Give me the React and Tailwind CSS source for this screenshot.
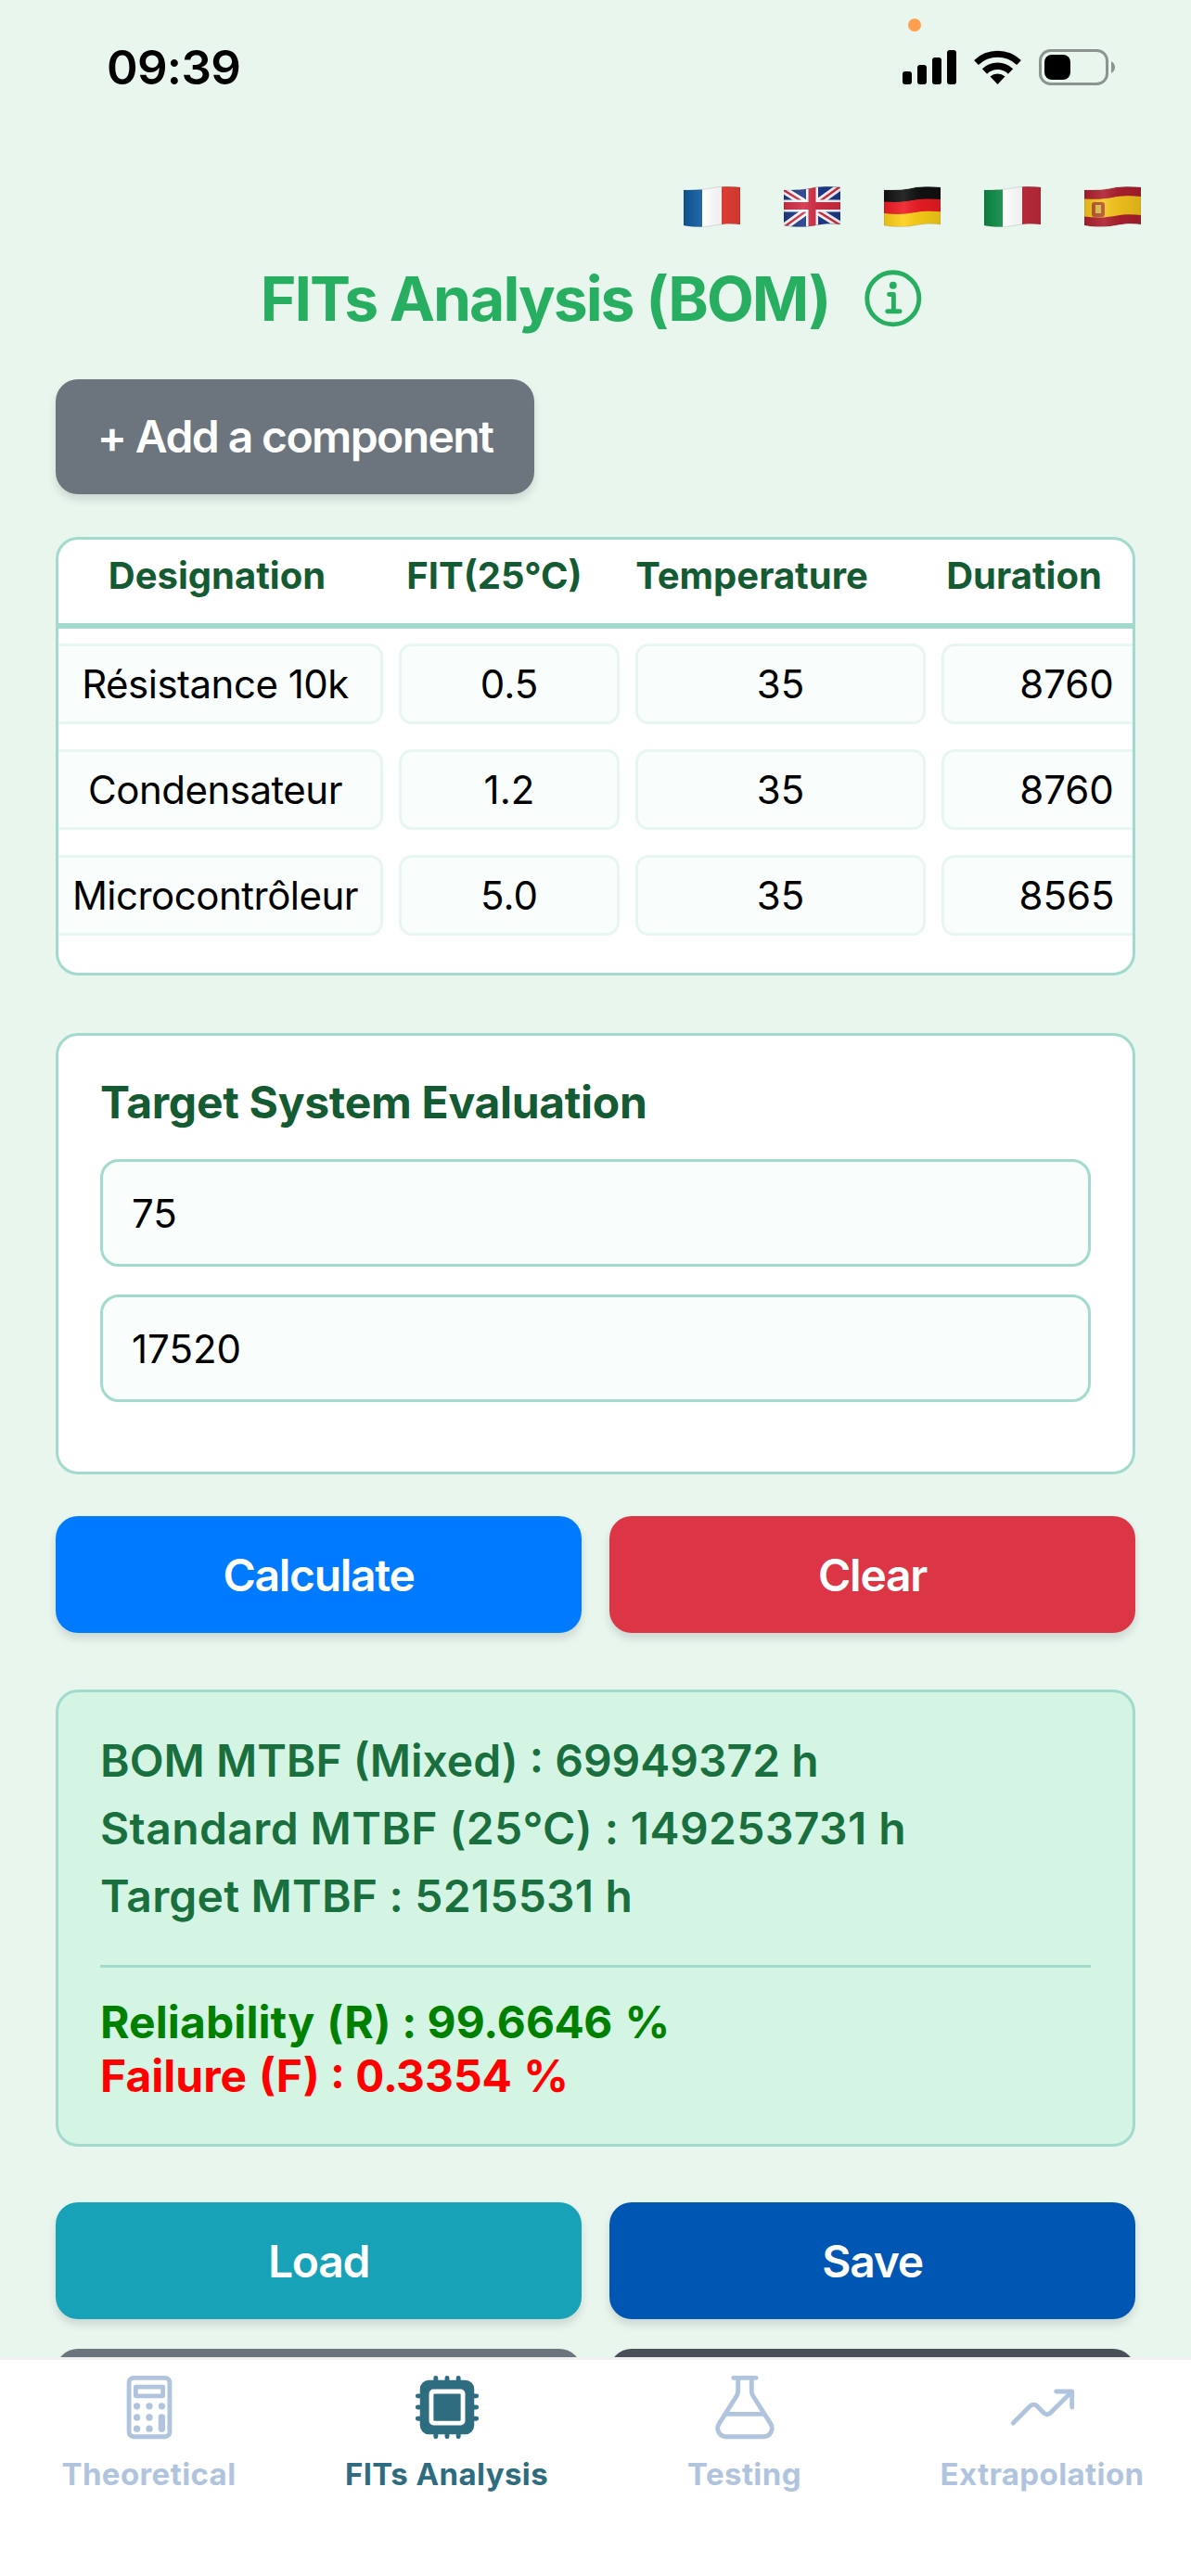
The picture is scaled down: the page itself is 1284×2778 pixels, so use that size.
import { IoCalculatorOutline, IoHardwareChip, IoFlaskOutline, IoTrendingUpOutline, IoInformationCircleOutline } from "react-icons/io5";

const rows = [
  { name: "Résistance 10k", fit: "0.5", temp: "35", duration: "8760" },
  { name: "Condensateur", fit: "1.2", temp: "35", duration: "8760" },
  { name: "Microcontrôleur", fit: "5.0", temp: "35", duration: "8565" },
];

const tabs = [
  { label: "Theoretical", Icon: IoCalculatorOutline },
  { label: "FITs Analysis", Icon: IoHardwareChip, active: true },
  { label: "Testing", Icon: IoFlaskOutline },
  { label: "Extrapolation", Icon: IoTrendingUpOutline },
];

// wavy band of a flag, a and b run 0..1 from the top edge to the bottom edge
const band = (a, b) => {
  const top = [4, 4, 4, 1, 0, 0, 1];
  const bot = [42, 44, 44, 42, 40, 40, 41];
  const y = (t, i) => top[i] + t * (bot[i] - top[i]);
  return `M0 ${y(a, 0)} C12 ${y(a, 1)} 22 ${y(a, 2)} 34 ${y(a, 3)} C44 ${y(a, 4)} 52 ${y(a, 5)} 61 ${y(a, 6)} L61 ${y(b, 6)} C52 ${y(b, 5)} 44 ${y(b, 4)} 34 ${y(b, 3)} C22 ${y(b, 2)} 12 ${y(b, 1)} 0 ${y(b, 0)} Z`;
};

const Flag = ({ id, children }) => (
  <svg width="61" height="44" viewBox="0 0 61 44">
    <defs>
      <clipPath id={`clip-${id}`}>
        <path d={band(0, 1)} />
      </clipPath>
      <linearGradient id={`shade-${id}`} x1="0" x2="1" y1="0" y2="0">
        <stop offset="0" stopColor="#000" stopOpacity="0.1" />
        <stop offset="0.35" stopColor="#fff" stopOpacity="0.1" />
        <stop offset="0.65" stopColor="#000" stopOpacity="0.06" />
        <stop offset="1" stopColor="#000" stopOpacity="0.12" />
      </linearGradient>
    </defs>
    <g clipPath={`url(#clip-${id})`}>
      {children}
      <rect width="61" height="44" fill={`url(#shade-${id})`} />
    </g>
    <path d={band(0, 1)} fill="none" stroke="#000" strokeOpacity="0.12" strokeWidth="1" />
  </svg>
);

const Flags = () => (
  <div className="flex justify-end gap-[47px] pr-[54px] h-[44px]">
    <Flag id="fr">
      <rect x="0" width="20" height="44" fill="#0f5aa0" />
      <rect x="20" width="21" height="44" fill="#ffffff" />
      <rect x="41" width="20" height="44" fill="#ea4036" />
    </Flag>
    <Flag id="uk">
      <rect width="61" height="44" fill="#1f3a8a" />
      <path d="M0 4 L61 42 M61 0 L0 44" stroke="#fff" strokeWidth="8" />
      <path d="M0 4 L61 42 M61 0 L0 44" stroke="#d22f45" strokeWidth="2.5" />
      <path d="M30.5 0 V44 M0 21 H61" stroke="#fff" strokeWidth="13" />
      <path d="M30.5 0 V44 M0 21 H61" stroke="#d22f45" strokeWidth="8" />
    </Flag>
    <Flag id="de">
      <path d={band(0, 0.34)} fill="#111111" />
      <path d={band(0.33, 0.67)} fill="#ee1c25" />
      <path d={band(0.66, 1)} fill="#fdd017" />
    </Flag>
    <Flag id="it">
      <rect x="0" width="20" height="44" fill="#0b8a45" />
      <rect x="20" width="21" height="44" fill="#ffffff" />
      <rect x="41" width="20" height="44" fill="#c22b3c" />
    </Flag>
    <Flag id="es">
      <path d={band(0, 0.26)} fill="#ad1f2e" />
      <path d={band(0.25, 0.76)} fill="#f6c51d" />
      <path d={band(0.75, 1)} fill="#ad1f2e" />
      <rect x="8" y="17" width="14" height="16" rx="3" fill="#b5522c" />
      <rect x="12" y="20" width="6" height="9" fill="#d8c04a" />
    </Flag>
  </div>
);

const StatusIcons = () => (
  <div className="flex items-start gap-[19px] pt-px">
    <svg width="58" height="37" viewBox="0 0 58 37">
      <rect x="0" y="23" width="10" height="14" rx="3" />
      <rect x="16" y="16" width="10" height="21" rx="3" />
      <rect x="32" y="8" width="10" height="29" rx="3" />
      <rect x="48" y="0" width="10" height="37" rx="3" />
    </svg>
    <svg width="51" height="37" viewBox="0 0 51 37">
      <path d="M2.5 13.5 A33.5 33.5 0 0 1 48.5 13.5" fill="none" stroke="#000" strokeWidth="7" />
      <path d="M11.5 23 A20 20 0 0 1 39.5 23" fill="none" stroke="#000" strokeWidth="7.5" />
      <path d="M25.5 37 L17.5 28.5 A12 12 0 0 1 33.5 28.5 Z" />
    </svg>
    <svg width="82" height="39" viewBox="0 0 82 39" className="-mt-px">
      <rect x="1.5" y="1.5" width="72" height="36" rx="11" fill="none" stroke="#8c9490" strokeWidth="3" />
      <rect x="6" y="6" width="28" height="27" rx="8" />
      <path d="M78 13 C81 15 82 17 82 19.5 C82 22 81 24 78 26 Z" fill="#8c9490" />
    </svg>
  </div>
);

const Cell = ({ w, children }) => (
  <div className={`${w} h-[87px] shrink-0 flex items-center justify-center bg-[#f9fdfb] border-[3px] border-[#e8f6f0] rounded-[14px] text-[42px] text-black`}>
    {children}
  </div>
);

const Btn = ({ color, children }) => (
  <div className={`${color} flex-1 h-[126px] pt-[2px] rounded-[24px] flex items-center justify-center text-[48px] tracking-[-1.3px] font-semibold text-white shadow-[0_6px_10px_rgba(0,0,0,0.12)]`}>
    {children}
  </div>
);

const App = () => {
  return (
    <div className="h-[2778px] flex flex-col overflow-hidden bg-[#e8f6ee] font-[Inter,sans-serif]">
      <div className="flex-1 min-h-0 overflow-hidden">
        {/* Status bar */}
        <div className="relative h-[201px] flex items-start justify-between pl-[115px] pr-[82px] pt-[53px]">
          <span className="text-[51px] leading-[40px] font-semibold tracking-[-0.7px] text-black">09:39</span>
          <StatusIcons />
          <div className="absolute left-[979px] top-[20px] w-[14px] h-[14px] rounded-full bg-[#ff9f4f]" />
        </div>

        <Flags />

        <div className="mt-[47px] h-[61px] flex items-center justify-center gap-[31px]">
          <h1 className="text-[66px] leading-[61px] font-bold tracking-[-2px] text-[#27ae60]">FITs Analysis (BOM)</h1>
          <IoInformationCircleOutline className="w-[78px] h-[78px] text-[#27ae60]" />
        </div>

        <div className="mt-[56px] ml-[60px] w-[516px] h-[124px] rounded-[24px] bg-[#6c757d] flex items-center justify-center text-[48px] tracking-[-1.6px] font-semibold text-white shadow-[0_6px_10px_rgba(0,0,0,0.12)]">
          + Add a component
        </div>

        {/* BOM table */}
        <div className="mt-[46px] mx-[60px] h-[473px] bg-white border-[3px] border-[#a2dacd] rounded-[24px] overflow-hidden">
          <div className="h-[96px] flex -ml-[12px] pb-[12px] items-center border-b-[6px] border-[#a2dacd] text-[40px] font-bold text-[#145a32] text-center">
            <div className="w-[366px] shrink-0">Designation</div>
            <div className="w-[232px] shrink-0">FIT(25°C)</div>
            <div className="w-[323px] shrink-0">Temperature</div>
            <div className="w-[264px] shrink-0">Duration</div>
          </div>
          <div className="pt-[16px] flex flex-col gap-[27px]">
            {rows.map((row) => (
              <div key={row.name} className="flex gap-[17px] -ml-[12px]">
                <Cell w="w-[362px] tracking-[-0.5px]">{row.name}</Cell>
                <Cell w="w-[238px]">{row.fit}</Cell>
                <Cell w="w-[313px]">{row.temp}</Cell>
                <Cell w="w-[270px]">{row.duration}</Cell>
              </div>
            ))}
          </div>
        </div>

        {/* Target system */}
        <div className="mt-[62px] mx-[60px] h-[476px] bg-white border-[3px] border-[#a2dacd] rounded-[24px] px-[45px] pt-[43px]">
          <h2 className="text-[48px] leading-[58px] font-bold tracking-[-0.3px] text-[#145a32]">Target System Evaluation</h2>
          <div className="mt-[32px] flex flex-col gap-[30px]">
            {["75", "17520"].map((value) => (
              <div key={value} className="h-[116px] flex items-center px-[31px] bg-[#f9fdfb] border-[3px] border-[#a2dacd] rounded-[20px] text-[42px] text-black">
                {value}
              </div>
            ))}
          </div>
        </div>

        <div className="mt-[45px] mx-[60px] flex gap-[30px]">
          <Btn color="bg-[#007bff]">Calculate</Btn>
          <Btn color="bg-[#dc3545]">Clear</Btn>
        </div>

        {/* Results */}
        <div className="mt-[61px] mx-[60px] h-[493px] bg-[#d4f5e4] border-[3px] border-[#a2dacd] rounded-[24px] px-[45px] pt-[45px] text-[48px] leading-[58px] font-semibold">
          <div className="flex flex-col gap-[15px] text-[#196f3d]">
            <div>BOM MTBF (Mixed) : 69949372 h</div>
            <div className="tracking-[0.4px]">Standard MTBF (25°C) : 149253731 h</div>
            <div className="tracking-[0.2px]">Target MTBF : 5215531 h</div>
          </div>
          <div className="mt-[45px] mb-[30px] h-[3px] bg-[#a2dacd]" />
          <div className="font-bold tabular-nums tracking-[0.1px] text-[#008000]">Reliability (R) : 99.6646 %</div>
          <div className="font-bold tabular-nums text-[#ff0000]">Failure (F) : 0.3354 %</div>
        </div>

        <div className="mt-[60px] mx-[60px] flex gap-[30px]">
          <Btn color="bg-[#17a2b8]">Load</Btn>
          <Btn color="bg-[#0056b3]">Save</Btn>
        </div>
        {/* next two buttons, cut off by the tab bar */}
        <div className="mt-[32px] mx-[60px] flex gap-[30px]">
          <Btn color="bg-[#6c757d]" />
          <Btn color="bg-[#495057]" />
        </div>
      </div>

      {/* Tab bar */}
      <div className="h-[236px] shrink-0 bg-white border-t-[3px] border-[#f0f0f0] flex">
        {tabs.map(({ label, Icon, active }) => (
          <div key={label} className={`flex-1 flex flex-col items-center pt-[12px] ${active ? "text-[#2e6c80]" : "text-[#b0c4de]"}`}>
            <Icon className="w-[78px] h-[78px]" />
            <span className="mt-[13px] text-[33px] leading-[40px] font-bold tracking-[0.4px]">{label}</span>
          </div>
        ))}
      </div>
    </div>
  );
};

export default App;
